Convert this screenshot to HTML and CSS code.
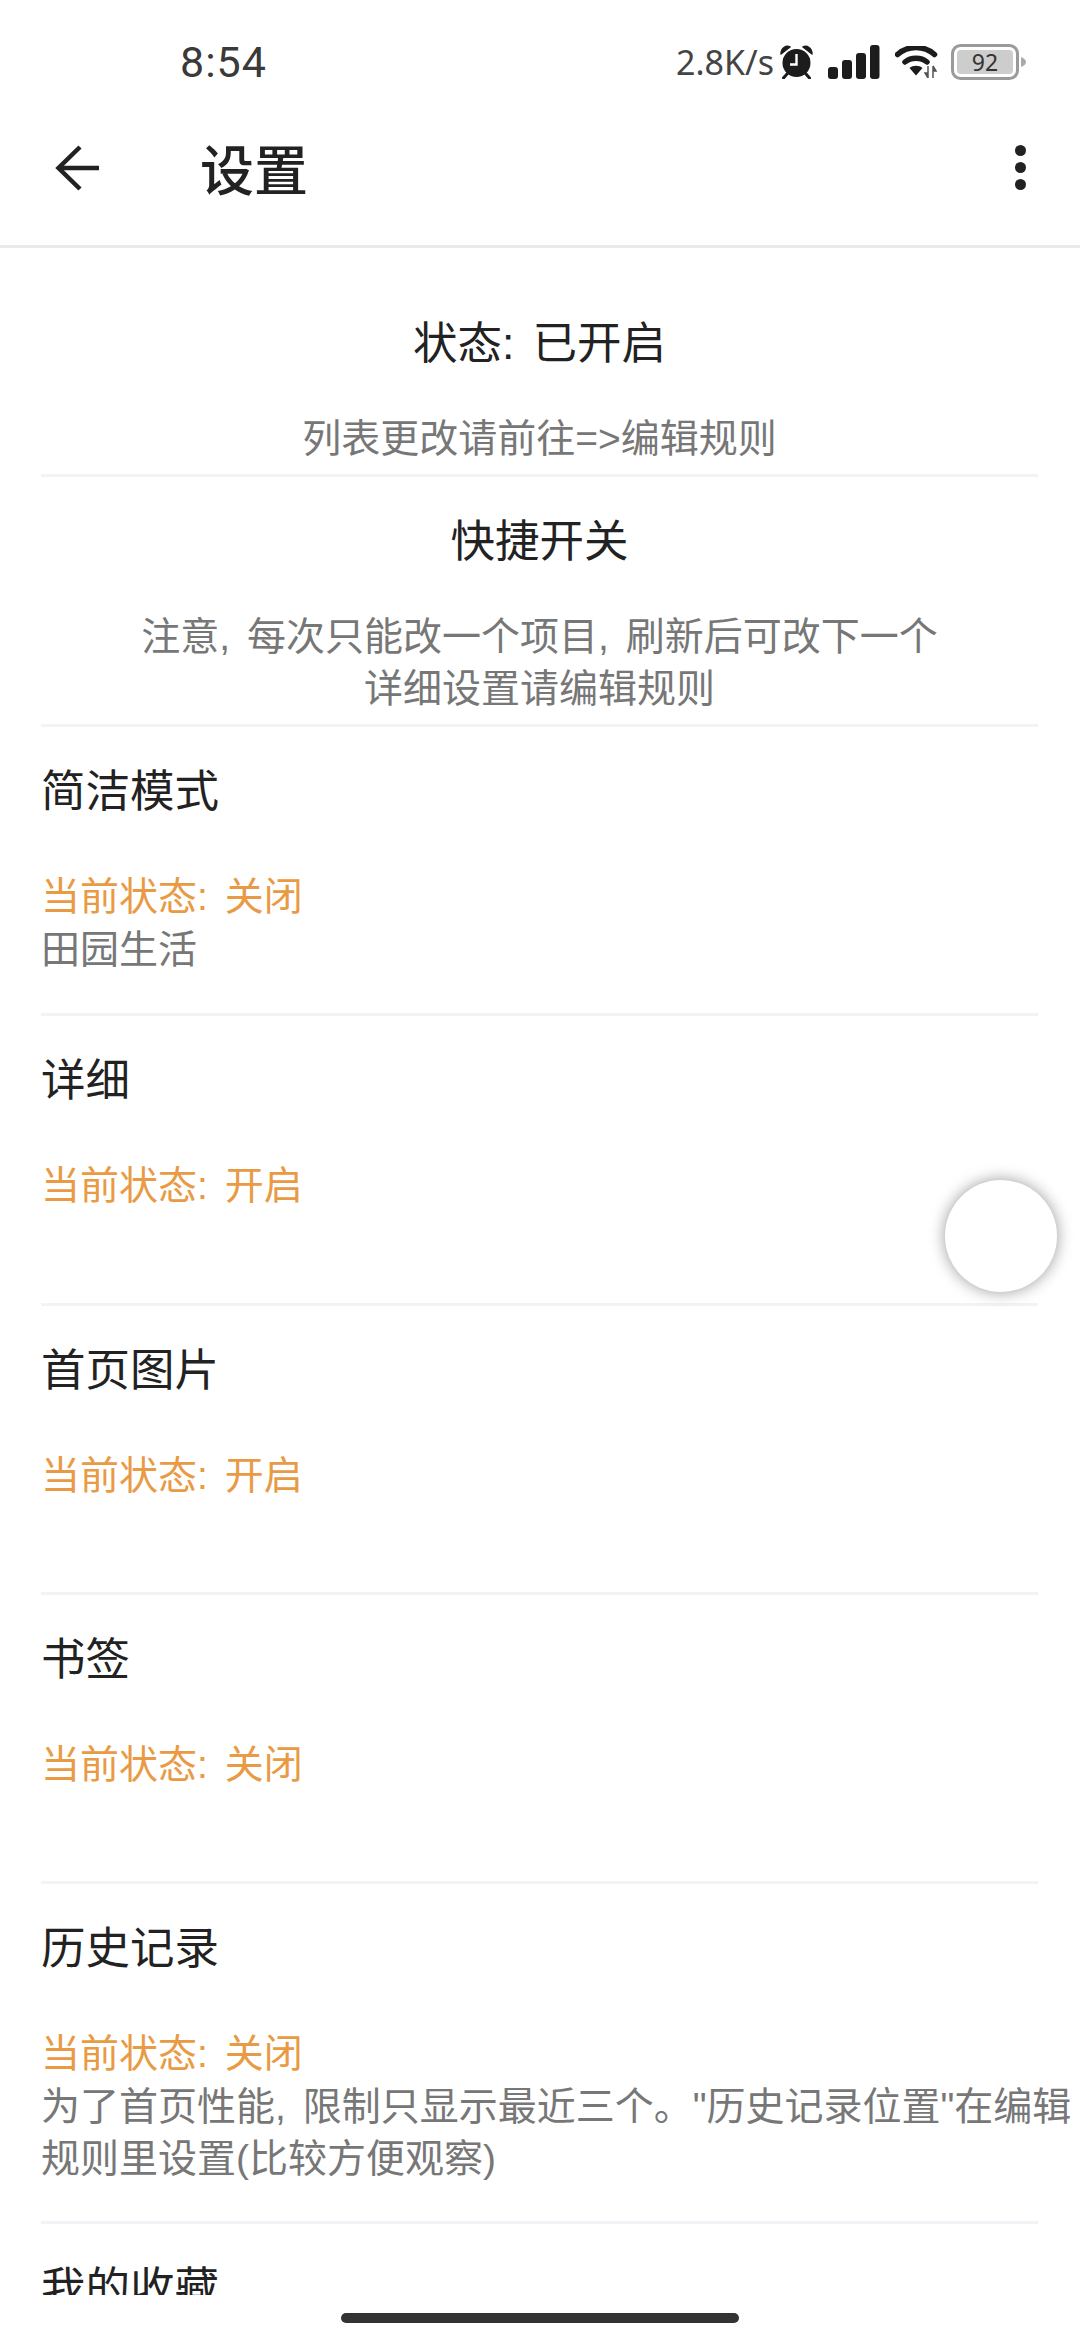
FILE: index.html
```html
<!DOCTYPE html>
<html lang="zh-CN">
<head>
    <meta charset="UTF-8">
    <meta name="viewport" content="width=device-width, initial-scale=1.0">
    <title>设置</title>
    <link rel="stylesheet" href="styles.css">
</head>
<body>
    <div class="status-bar">
        <span class="clock">8:54</span>
        <div class="status-icons">
            <span class="speed">2.8K/s</span>
            <svg class="icon-alarm" width="33" height="34" viewBox="0 0 33 34">
                <path d="M1 9 C1 3 6 0 10 2 Z M32 9 C32 3 27 0 23 2 Z" fill="#1c1c1c" stroke="#1c1c1c" stroke-width="1.5" stroke-linejoin="round"/>
                <circle cx="16.5" cy="18" r="14" fill="#1c1c1c"/>
                <path d="M7 29 L3.5 33 M26 29 L29.5 33" stroke="#1c1c1c" stroke-width="3" stroke-linecap="round"/>
                <path d="M16.5 9 V19.5 H10" fill="none" stroke="#fff" stroke-width="2.4"/>
            </svg>
            <svg class="icon-signal" width="52" height="34" viewBox="0 0 52 34">
                <rect x="0" y="22" width="10" height="12" rx="3" fill="#1c1c1c"/>
                <rect x="14" y="15" width="10" height="19" rx="3" fill="#1c1c1c"/>
                <rect x="28" y="8" width="10" height="26" rx="3" fill="#1c1c1c"/>
                <rect x="42" y="0" width="9.500" height="34" rx="3" fill="#1c1c1c"/>
            </svg>
            <svg class="icon-wifi" width="44" height="32" viewBox="0 0 44 32">
                <path d="M2.500 8.500 C13 -1 29 -1 39.500 8.500" fill="none" stroke="#1c1c1c" stroke-width="5.500" stroke-linecap="round"/>
                <path d="M10 16 C16 11 26 11 32 16" fill="none" stroke="#1c1c1c" stroke-width="5.500" stroke-linecap="round"/>
                <path d="M14.500 22 C18 19 24 19 27.500 22 L21 29.500 Z" fill="#1c1c1c"/>
                <path d="M33 20 V32 M33 32 L30 27 H33 M38 20 V32 M38 20 L41 25 H38" fill="#555" stroke="#555" stroke-width="1.500"/>
            </svg>
            <svg class="icon-battery" width="76" height="36" viewBox="0 0 76 36">
                <rect x="1.500" y="1.500" width="65" height="33" rx="8" fill="none" stroke="#9a9a9a" stroke-width="3"/>
                <rect x="6" y="6" width="56" height="24" rx="4" fill="#cdcdcd"/>
                <path d="M70 13 C73 14 75 16 75 18 C75 20 73 22 70 23 Z" fill="#aaa"/>
                <text x="34" y="27" text-anchor="middle" class="battery-level">92</text>
            </svg>
        </div>
    </div>

    <header class="app-bar">
        <svg class="back-icon" width="46" height="46" viewBox="0 0 46 46">
            <path d="M44 23 H4 M25 2 L3.500 23 L25 44" fill="none" stroke="#222" stroke-width="4.500"/>
        </svg>
        <h1 class="page-title">设置</h1>
        <div class="more-menu">
            <span class="dot"></span>
            <span class="dot"></span>
            <span class="dot"></span>
        </div>
    </header>

    <main class="content">
        <section class="notice notice-status">
            <h2 class="notice-title">状态: 已开启</h2>
            <p class="notice-text">列表更改请前往=&gt;编辑规则</p>
        </section>
        <section class="notice">
            <h2 class="notice-title">快捷开关</h2>
            <p class="notice-text">注意, 每次只能改一个项目, 刷新后可改下一个<br>详细设置请编辑规则</p>
        </section>

        <section class="setting">
            <h3 class="setting-name">简洁模式</h3>
            <p class="setting-state">当前状态: 关闭</p>
            <p class="setting-desc">田园生活</p>
        </section>
        <section class="setting">
            <h3 class="setting-name">详细</h3>
            <p class="setting-state">当前状态: 开启</p>
            <p class="setting-desc"></p>
        </section>
        <section class="setting">
            <h3 class="setting-name">首页图片</h3>
            <p class="setting-state">当前状态: 开启</p>
            <p class="setting-desc"></p>
        </section>
        <section class="setting">
            <h3 class="setting-name">书签</h3>
            <p class="setting-state">当前状态: 关闭</p>
            <p class="setting-desc"></p>
        </section>
        <section class="setting setting-long">
            <h3 class="setting-name">历史记录</h3>
            <p class="setting-state">当前状态: 关闭</p>
            <p class="setting-desc">为了首页性能, 限制只显示最近三个。"历史记录位置"在编辑规则里设置(比较方便观察)</p>
        </section>
        <section class="setting">
            <h3 class="setting-name">我的收藏</h3>
        </section>
    </main>

    <div class="home-area">
        <div class="home-bar"></div>
    </div>

    <div class="float-ball"></div>
</body>
</html>
```

FILE: styles.css
```css
body {
    margin: 0;
    height: 2340px;
    display: flex;
    flex-direction: column;
    overflow: hidden;
    background: #fff;
    font-family: 'Liberation Sans', 'Noto Sans CJK SC', sans-serif;
    color: #222;
}

h1, h2, h3, p {
    margin: 0;
    font-weight: 400;
}

.status-bar {
    height: 90px;
    box-sizing: border-box;
    padding: 34px 53px 0 180px;
    display: flex;
    align-items: center;
    justify-content: space-between;
    flex-shrink: 0;
}

.clock {
    font-family: 'Roboto', sans-serif;
    font-size: 43px;
    line-height: 56px;
    letter-spacing: 1px;
    color: #3a3a3a;
}

.status-icons {
    display: flex;
    align-items: center;
}

.speed {
    font-family: 'Noto Sans', sans-serif;
    font-size: 34px;
    line-height: 40px;
    color: #444;
    margin-right: 6px;
}

.icon-signal {
    margin-left: 15px;
}

.icon-wifi {
    margin-left: 15px;
}

.icon-battery {
    margin-left: 12px;
}

.battery-level {
    font-family: 'Noto Sans', sans-serif;
    font-size: 23px;
    fill: #333;
}

.app-bar {
    height: 155px;
    flex-shrink: 0;
    border-bottom: 3px solid #e9e9e9;
    display: flex;
    align-items: center;
    padding: 0 54px 0 55px;
}

.page-title {
    font-size: 54px;
    font-weight: 500;
    margin-left: 99px;
    margin-bottom: 1px;
    color: #222;
}

.more-menu {
    margin-left: auto;
    display: flex;
    flex-direction: column;
    gap: 6px;
}

.dot {
    width: 11px;
    height: 11px;
    border-radius: 50%;
    background: #222;
}

.content {
    flex: 1;
    min-height: 0;
    overflow: hidden;
    padding: 0 42px 0 41px;
}

.notice {
    padding: 32px 0 9px;
    border-bottom: 3px solid #f3f3f7;
    text-align: center;
}

.notice-status {
    padding-top: 63px;
}

.notice-title {
    font-size: 44.5px;
    line-height: 66px;
    word-spacing: 6px;
}

.notice-text {
    margin-top: 36px;
    font-size: 39px;
    line-height: 52px;
    color: #777;
    word-spacing: 6px;
}

.setting {
    height: 289.3px;
    box-sizing: border-box;
    padding-top: 32px;
    border-bottom: 3px solid #f3f3f7;
}

.setting-long {
    height: 340px;
}

.setting-name {
    font-size: 44.5px;
    line-height: 66px;
}

.setting-state {
    margin-top: 45px;
    font-size: 39px;
    line-height: 54px;
    color: #e99a44;
    word-spacing: 6px;
}

.setting-desc {
    font-size: 39px;
    line-height: 52px;
    color: #777;
    margin-right: -42px;
    word-spacing: 6px;
}

.home-area {
    height: 45px;
    flex-shrink: 0;
    box-sizing: border-box;
    padding-top: 18px;
    display: flex;
    justify-content: center;
    background: #fff;
}

.home-bar {
    width: 398px;
    height: 10px;
    border-radius: 5px;
    background: #333;
}

.float-ball {
    position: absolute;
    left: 945px;
    top: 1180px;
    width: 112px;
    height: 112px;
    border-radius: 50%;
    background: #fff;
    box-shadow: 0 0 16px rgba(0, 0, 0, 0.4);
}
```
